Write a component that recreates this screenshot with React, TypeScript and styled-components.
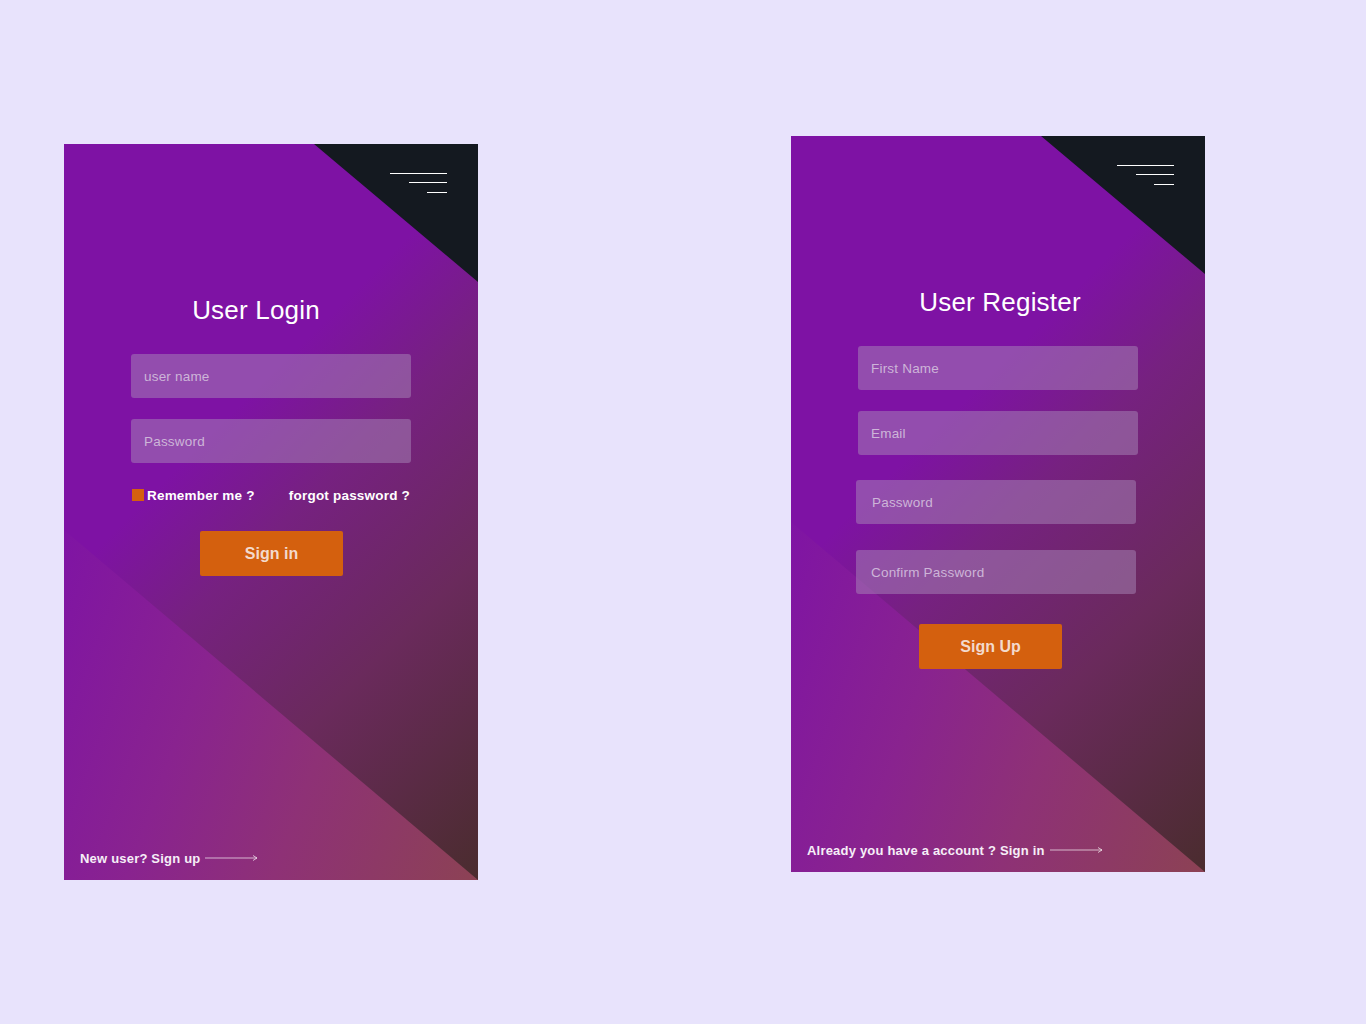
import React from "react";
import styled, { createGlobalStyle } from "styled-components";

const GlobalStyle = createGlobalStyle`
  html, body { margin: 0; padding: 0; background: #e8e3fc; }
  body { font-family: "Liberation Sans", Arial, sans-serif; }
`;

const Page = styled.main`
  min-height: 1024px;
  box-sizing: border-box;
  display: flex;
  align-items: flex-start;
  gap: 313px;
  padding: 136px 0 0 64px;
`;

const Card = styled.section<{ $top: number }>`
  position: relative;
  overflow: hidden;
  width: 414px;
  height: 736px;
  margin-top: ${(p) => p.$top}px;
  display: flex;
  flex-direction: column;
  background: linear-gradient(
    135deg,
    #7e12a4 0%,
    #7e12a4 38%,
    #762180 52%,
    #6a2a5c 72%,
    #4a2c2e 100%
  );

  &::before {
    content: "";
    position: absolute;
    top: 0;
    right: 0;
    width: 164px;
    height: 138px;
    background: #141920;
    clip-path: polygon(0 0, 100% 0, 100% 100%);
  }

  &::after {
    content: "";
    position: absolute;
    left: 0;
    bottom: 0;
    width: 100%;
    height: 350px;
    background: linear-gradient(
      110deg,
      #7f14a4 0%,
      #89238f 35%,
      #8e3176 62%,
      #8c4254 100%
    );
    clip-path: polygon(0 0, 100% 100%, 0 100%);
  }

  & > * {
    position: relative;
    z-index: 1;
  }
`;

const Menu = styled.div`
  display: flex;
  flex-direction: column;
  align-items: flex-end;
  padding: 29px 31px 0 0;
`;

const MenuLine = styled.span<{ $w: number; $gap: number }>`
  display: block;
  width: ${(p) => p.$w}px;
  height: 1px;
  margin-top: ${(p) => p.$gap}px;
  background: #ffffff;
`;

const Title = styled.h1<{ $shift: number }>`
  margin: 101px 0 0;
  padding: ${(p) => (p.$shift < 0 ? `0 ${-p.$shift * 2}px 0 0` : `0 0 0 ${p.$shift * 2}px`)};
  font-size: 26px;
  line-height: 32px;
  font-weight: 400;
  color: #ffffff;
  text-align: center;
  letter-spacing: 0.2px;
`;

const Field = styled.input<{ $top: number; $left: number; $pad?: number }>`
  align-self: flex-start;
  box-sizing: border-box;
  width: 280px;
  height: 44px;
  margin: ${(p) => p.$top}px 0 0 ${(p) => p.$left}px;
  padding: 0 ${(p) => p.$pad ?? 13}px;
  border: none;
  border-radius: 3px;
  outline: none;
  background: rgba(168, 136, 184, 0.5);
  font-family: "Liberation Sans", Arial, sans-serif;
  font-size: 13.5px;
  letter-spacing: 0.2px;
  color: #ffffff;

  &::placeholder {
    color: #cdb5d8;
  }
`;

const OptionsRow = styled.div`
  align-self: flex-start;
  width: 280px;
  margin: 24px 0 0 67px;
  display: flex;
  align-items: center;
  justify-content: space-between;
  height: 16px;
`;

const CheckLabel = styled.label`
  display: flex;
  align-items: center;
  gap: 3px;
  font-size: 13.5px;
  font-weight: 700;
  letter-spacing: 0.2px;
  color: #ffffff;
`;

const CheckBox = styled.span`
  display: inline-block;
  width: 12px;
  height: 12px;
  margin-left: 1px;
  background: #d4600e;
`;

const TextLink = styled.a`
  font-size: 13.5px;
  font-weight: 700;
  letter-spacing: 0.2px;
  color: #ffffff;
  text-decoration: none;
  margin-right: 1px;
`;

const Button = styled.button<{ $top: number; $left: number }>`
  align-self: flex-start;
  width: 143px;
  height: 45px;
  margin: ${(p) => p.$top}px 0 0 ${(p) => p.$left}px;
  border: none;
  border-radius: 2px;
  background: #d4600e;
  color: #f3dacd;
  font-family: "Liberation Sans", Arial, sans-serif;
  font-size: 16px;
  font-weight: 700;
  cursor: pointer;
`;

const Footer = styled.div`
  margin-top: auto;
  padding: 0 0 14px 16px;
  display: flex;
  align-items: center;
  gap: 5px;
  height: 16px;
`;

const FooterText = styled.span`
  font-size: 13px;
  font-weight: 700;
  letter-spacing: 0.2px;
  color: #f6eef7;
  white-space: pre;
`;

const Arrow = () => (
  <svg width="53" height="8" viewBox="0 0 53 8" fill="none">
    <line x1="0" y1="4" x2="52" y2="4" stroke="rgba(255,255,255,0.65)" strokeWidth="1.2" />
    <path d="M48 1.5 L52 4 L48 6.5" stroke="rgba(255,255,255,0.65)" strokeWidth="1" fill="none" />
  </svg>
);

const MenuIcon = () => (
  <Menu>
    <MenuLine $w={57} $gap={0} />
    <MenuLine $w={38} $gap={8} />
    <MenuLine $w={20} $gap={9} />
  </Menu>
);

export default function App() {
  return (
    <>
      <GlobalStyle />
      <Page>
        <Card $top={8}>
          <MenuIcon />
          <Title $shift={-15}>User Login</Title>
          <Field $top={28} $left={67} placeholder="user name" />
          <Field $top={21} $left={67} placeholder="Password" type="password" />
          <OptionsRow>
            <CheckLabel>
              <CheckBox />
              Remember me ?
            </CheckLabel>
            <TextLink href="#">forgot password ?</TextLink>
          </OptionsRow>
          <Button $top={28} $left={136}>Sign in</Button>
          <Footer>
            <FooterText>New user? Sign up</FooterText>
            <Arrow />
          </Footer>
        </Card>

        <Card $top={0}>
          <MenuIcon />
          <Title $shift={2}>User Register</Title>
          <Field $top={28} $left={67} placeholder="First Name" />
          <Field $top={21} $left={67} placeholder="Email" />
          <Field $top={25} $left={65} $pad={16} placeholder="Password" type="password" />
          <Field $top={26} $left={65} $pad={15} placeholder="Confirm Password" type="password" />
          <Button $top={30} $left={128}>Sign Up</Button>
          <Footer>
            <FooterText>{"Already you have a account ? Sign in"}</FooterText>
            <Arrow />
          </Footer>
        </Card>
      </Page>
    </>
  );
}
